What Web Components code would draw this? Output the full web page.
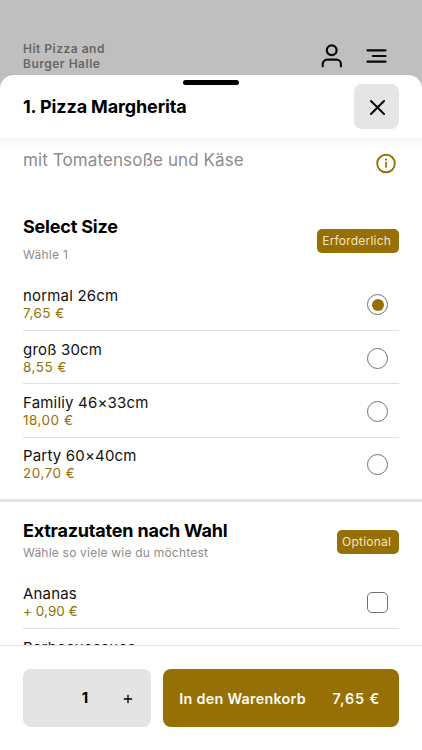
<!DOCTYPE html>
<html lang="de">
<head>
<meta charset="utf-8">
<title>Pizza Margherita</title>
<style>
html, body { margin: 0; height: 100%; }
body {
  --gold: #967005;
  --grey: #e4e4e4;
  --muted: #8c8c8c;
  font-family: Inter, "Liberation Sans", sans-serif;
  color: #000;
  background: #bfbfbf;
  overflow: hidden;
}
</style>
</head>
<body>
<script>
function define(name, html, setup) {
  customElements.define(name, class extends HTMLElement {
    connectedCallback() {
      if (this.shadowRoot) return;
      const root = this.attachShadow({ mode: 'open' });
      root.innerHTML = html;
      if (setup) setup(this, root);
    }
  });
}

define('order-app', `
<style>:host { display: flex; flex-direction: column; height: 750px; width: 422px; }</style>
<slot></slot>`);

define('shop-bar', `
<style>
:host { display: flex; flex: none; box-sizing: border-box; height: 75px; padding: 41px 35px 0 23px; justify-content: space-between; }
.name { width: 100px; font: 600 12px/15px Inter, sans-serif; letter-spacing: .5px; color: #676767; }
.icons { display: flex; gap: 22px; }
svg { display: block; fill: none; stroke: #0a0a0a; stroke-width: 2.2; stroke-linecap: round; stroke-linejoin: round; }
</style>
<div class="name"><slot></slot></div>
<div class="icons">
<svg width="23" height="30" viewBox="0 0 23 30"><circle cx="11.7" cy="9.2" r="4.9"/><path d="M2.7 25.3v-2.2a4.4 4.4 0 0 1 4.4-4.4h9.4a4.4 4.4 0 0 1 4.4 4.4v2.2"/></svg>
<svg width="22" height="30" viewBox="0 0 22 30"><path d="M2.5 9.3h18M7.7 15h12.8M2.5 20.7h18"/></svg>
</div>`);

define('item-sheet', `
<style>
:host { display: flex; flex-direction: column; flex: 1; min-height: 0; background: #fff; border-radius: 14px 14px 0 0; overflow: hidden; }
.content { flex: 1; min-height: 0; overflow: hidden; background: linear-gradient(#f5f5f5, #fff 11px); }
</style>
<slot name="head"></slot>
<div class="content"><slot></slot></div>
<slot name="foot"></slot>`);

define('sheet-head', `
<style>
:host { display: flex; position: relative; flex: none; box-sizing: border-box; height: 63px; padding: 9px 23px 0; justify-content: space-between; align-items: flex-start; }
.grip { position: absolute; left: 183px; top: 5px; width: 56px; height: 5px; border-radius: 3px; background: #000; }
h1 { margin: 11px 0 0; font: 700 18px/24px Inter, sans-serif; letter-spacing: -.14px; }
button { width: 45px; height: 45px; padding: 0; border: 0; border-radius: 8px; background: #e5e5e5; display: grid; place-items: center; }
svg { display: block; margin: 1px 0 0 1px; fill: none; stroke: #000; stroke-width: 2; stroke-linecap: round; }
</style>
<div class="grip"></div>
<h1><slot></slot></h1>
<button aria-label="Schließen"><svg width="17" height="17" viewBox="0 0 17 17"><path d="M2 2l13 13M15 2L2 15"/></svg></button>`);

define('item-description', `
<style>
:host { display: flex; justify-content: space-between; box-sizing: border-box; height: 72px; padding: 10px 25px 0 23px; }
p { margin: 0; font: 400 17px/24px Inter, sans-serif; letter-spacing: .1px; color: var(--muted); }
svg { display: block; margin-top: 5px; }
</style>
<p><slot></slot></p>
<svg width="21" height="21" viewBox="0 0 21 21"><circle cx="10" cy="10.5" r="8.8" fill="none" stroke="#967005" stroke-width="1.9"/><path d="M10 9v5.7" stroke="#967005" stroke-width="1.7"/><circle cx="10" cy="6.6" r="1.1" fill="#967005"/></svg>`);

define('option-group', `
<style>
:host { display: block; padding: 0 23px; }
:host([divided]) { border-top: 3px solid #e2e2e2; }
header { display: flex; justify-content: space-between; align-items: flex-start; box-sizing: border-box; height: 67.6px; padding-top: 5px; }
h2 { margin: 0; font: 700 18px/24px Inter, sans-serif; letter-spacing: -.2px; }
p { margin: 8px 0 0; font: 400 12px/16px Inter, sans-serif; letter-spacing: .27px; color: var(--muted); }
.badge { margin-top: 14px; padding: 0 8px 0 5px; border-radius: 5px; background: var(--gold); color: #f6e6bd; font: 400 12px/24px Inter, sans-serif; letter-spacing: .2px; }
:host([divided]) header { height: 73.2px; padding-top: 16.5px; }
:host([divided]) p { margin-top: 2px; letter-spacing: .21px; }
:host([divided]) .badge { margin-top: 11.5px; }
</style>
<header><div><h2></h2><p></p></div><span class="badge"></span></header>
<slot></slot>`, (el, root) => {
  root.querySelector('h2').textContent = el.getAttribute('heading');
  root.querySelector('p').textContent = el.getAttribute('hint');
  root.querySelector('.badge').textContent = el.getAttribute('badge');
});

define('option-row', `
<style>
:host { display: flex; justify-content: space-between; align-items: center; box-sizing: border-box; height: 53.35px; padding: 9.6px 11px 7.7px 0; border-bottom: 1px solid #dedede; }
:host([last]) { height: 61.8px; border: 0; padding-bottom: 17.2px; }
.name { font: 400 15px/18px Inter, sans-serif; letter-spacing: .18px; color: #111; }
.price { font: 400 13.5px/17px Inter, sans-serif; letter-spacing: .5px; color: var(--gold); }
:host([extra]) .price { letter-spacing: .05px; }
.mark { box-sizing: border-box; width: 21px; height: 21px; border: 1px solid #707070; border-radius: 50%; display: grid; place-items: center; }
:host([extra]) .mark { border-radius: 5px; }
:host([checked]) .mark::after { content: ""; width: 12px; height: 12px; border-radius: 50%; background: var(--gold); }
</style>
<div><div class="name"><slot></slot></div><div class="price"></div></div>
<span class="mark"></span>`, (el, root) => {
  root.querySelector('.price').textContent = el.getAttribute('price');
});

define('cart-bar', `
<style>
:host { display: flex; flex: none; gap: 12px; box-sizing: border-box; height: 105px; padding: 23px 23px 23px; border-top: 1px solid #e2e2e2; background: #fff; }
.count { flex: none; width: 128.3px; height: 58px; border-radius: 8px; background: var(--grey); display: grid; grid-template-columns: 41px 42px 45px; align-items: center; justify-items: center; font: 700 15px/20px Inter, sans-serif; }
.count span { grid-column: 2; }
.count svg { grid-column: 3; margin: 2px 1px 0 0; display: block; }
.add { flex: 1; height: 58px; box-sizing: border-box; padding: 1px 19px 0 16px; border-radius: 8px; background: var(--gold); color: #fffdf5; display: flex; justify-content: space-between; align-items: center; font: 600 14.3px/20px Inter, sans-serif; letter-spacing: .3px; }
.sum { letter-spacing: .9px; }
</style>
<div class="count"><span>1</span><svg width="10" height="10" viewBox="0 0 10 10"><path d="M5 .8v8.4M.8 5h8.4" stroke="#000" stroke-width="1.3"/></svg></div>
<div class="add"><span><slot></slot></span><span class="sum"></span></div>`, (el, root) => {
  root.querySelector('.sum').textContent = el.getAttribute('total');
});
</script>
<order-app>
  <shop-bar>Hit Pizza and<br>Burger Halle</shop-bar>
  <item-sheet>
    <sheet-head slot="head">1. Pizza Margherita</sheet-head>
    <item-description>mit Tomatensoße und Käse</item-description>
    <option-group heading="Select Size" hint="Wähle 1" badge="Erforderlich">
      <option-row price="7,65 €" checked>normal 26cm</option-row>
      <option-row price="8,55 €">groß 30cm</option-row>
      <option-row price="18,00 €">Familiy 46×33cm</option-row>
      <option-row price="20,70 €" last>Party 60×40cm</option-row>
    </option-group>
    <option-group divided heading="Extrazutaten nach Wahl" hint="Wähle so viele wie du möchtest" badge="Optional">
      <option-row extra price="+ 0,90 €">Ananas</option-row>
      <option-row extra price="+ 0,90 €">Barbecuesauce</option-row>
    </option-group>
    <cart-bar slot="foot" total="7,65 €">In den Warenkorb</cart-bar>
  </item-sheet>
</order-app>
</body>
</html>
